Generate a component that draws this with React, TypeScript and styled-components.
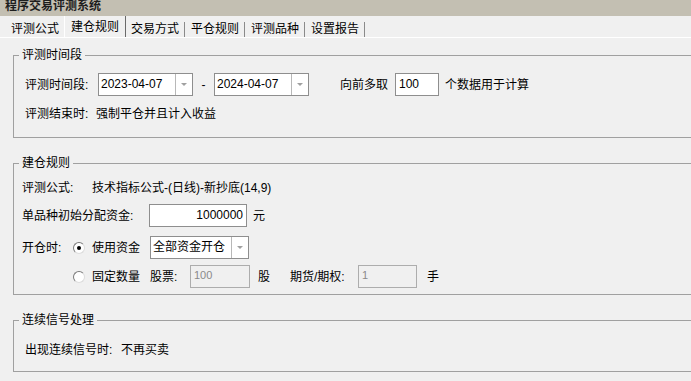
import React from 'react';
import styled, { createGlobalStyle } from 'styled-components';

const GlobalStyle = createGlobalStyle`
  html, body {
    margin: 0;
    padding: 0;
    background: #f0f0f0;
  }
  body {
    font-family: "Liberation Sans", "Noto Sans CJK SC", sans-serif;
    font-size: 12px;
    line-height: 16px;
    color: #000;
    overflow: hidden;
  }
`;

const Window = styled.div`
  width: 691px;
  height: 381px;
  overflow: hidden;
  background: #f0f0f0;
`;

const TitleBar = styled.div`
  height: 16px;
  background: #c3bfb2;
  overflow: hidden;
  padding-left: 5px;
`;

const Title = styled.div`
  font-weight: bold;
  font-size: 12px;
  line-height: 13px;
  color: #1e1e1e;
`;

const TabBar = styled.div`
  height: 21px;
  display: flex;
  padding-left: 5px;
  border-bottom: 1px solid #fff;
`;

const Tab = styled.div<{ $active?: boolean }>`
  width: ${p => (p.$active ? '62px' : '60px')};
  margin: ${p => (p.$active ? '0 -1px' : '0')};
  box-sizing: border-box;
  display: flex;
  justify-content: space-between;
  border-left: ${p => (p.$active ? '1px solid #fff' : 'none')};
  border-right: ${p => (p.$active ? '1px solid #6a6a6a' : 'none')};
`;

const TabLabel = styled.span<{ $active?: boolean }>`
  padding-left: 6px;
  padding-top: ${p => (p.$active ? '3px' : '5px')};
`;

const TabSep = styled.span`
  width: 1px;
  height: 15px;
  align-self: flex-end;
  background: #8a8a8a;
`;

const Content = styled.div`
  padding: 9px 0 0 13px;
`;

const Group = styled.fieldset<{ $mb?: number }>`
  margin: 0 -30px ${p => p.$mb ?? 17}px 0;
  padding: 0;
  border: 1px solid #a0a0a0;
  min-width: 0;
`;

const Legend = styled.legend`
  margin-left: 5px;
  padding: 0 3px;
  line-height: 16px;
`;

const GroupBody = styled.div<{ $pad: string }>`
  padding: ${p => p.$pad};
  display: flex;
  flex-direction: column;
`;

const Row = styled.div<{ $mt?: number }>`
  display: flex;
  align-items: center;
  margin-top: ${p => p.$mt ?? 0}px;
  white-space: nowrap;
`;

const Label = styled.span<{ $w?: number; $ml?: number }>`
  display: inline-block;
  width: ${p => (p.$w ? `${p.$w}px` : 'auto')};
  margin-left: ${p => p.$ml ?? 0}px;
  flex-shrink: 0;
`;

const ComboBox = styled.div<{ $w: number }>`
  width: ${p => p.$w}px;
  height: 23px;
  box-sizing: border-box;
  border: 1px solid #8e8e8e;
  background: #fff;
  display: flex;
  flex-shrink: 0;
`;

const ComboText = styled.span`
  flex: 1;
  padding-left: 2px;
  line-height: 21px;
`;

const ComboButton = styled.span`
  width: 16px;
  border-left: 1px solid #b8b8b8;
  display: flex;
  align-items: center;
  justify-content: center;

  &::after {
    content: '';
    border-left: 3px solid transparent;
    border-right: 3px solid transparent;
    border-top: 3px solid #a0a0a0;
  }
`;

const Dash = styled.span`
  width: 21px;
  text-align: center;
`;

const TextBox = styled.div<{ $w: number; $right?: boolean; $disabled?: boolean; $ml?: number }>`
  width: ${p => p.$w}px;
  height: 23px;
  box-sizing: border-box;
  margin-left: ${p => p.$ml ?? 0}px;
  border: 1px solid ${p => (p.$disabled ? '#adadad' : '#8e8e8e')};
  background: ${p => (p.$disabled ? '#f0f0f0' : '#fff')};
  color: ${p => (p.$disabled ? '#8a8a8a' : '#000')};
  font-size: ${p => (p.$disabled ? '11px' : '12px')};
  text-align: ${p => (p.$right ? 'right' : 'left')};
  padding: ${p => (p.$disabled ? '2px 3px' : '3px 3px')};
  line-height: 14px;
  flex-shrink: 0;
`;

const Radio = styled.span<{ $checked?: boolean }>`
  width: 12px;
  height: 12px;
  box-sizing: border-box;
  border-radius: 50%;
  border: 1px solid;
  border-color: #7a7a7a #dcdcdc #dcdcdc #7a7a7a;
  background: #fff;
  display: inline-flex;
  align-items: center;
  justify-content: center;
  margin: 0 7px 0 1px;
  flex-shrink: 0;

  &::after {
    content: '';
    width: 4px;
    height: 4px;
    border-radius: 50%;
    background: ${p => (p.$checked ? '#000' : 'transparent')};
  }
`;

const Combo: React.FC<{ width: number; value: string }> = ({ width, value }) => (
  <ComboBox $w={width}>
    <ComboText>{value}</ComboText>
    <ComboButton />
  </ComboBox>
);

const tabs = ['评测公式', '建仓规则', '交易方式', '平仓规则', '评测品种', '设置报告'];
const activeTab = 1;

const App: React.FC = () => {
  return (
    <Window>
      <GlobalStyle />
      <TitleBar>
        <Title>程序交易评测系统</Title>
      </TitleBar>
      <TabBar>
        {tabs.map((t, i) => (
          <Tab key={t} $active={i === activeTab}>
            <TabLabel $active={i === activeTab}>{t}</TabLabel>
            {i > activeTab && <TabSep />}
          </Tab>
        ))}
      </TabBar>
      <Content>
        <Group>
          <Legend>评测时间段</Legend>
          <GroupBody $pad="10px 0 15px 11px">
            <Row>
              <Label $w={73}>评测时间段:</Label>
              <Combo width={95} value="2023-04-07" />
              <Dash>-</Dash>
              <Combo width={95} value="2024-04-07" />
              <Label $ml={31}>向前多取</Label>
              <TextBox $w={44} $ml={7}>100</TextBox>
              <Label $ml={6}>个数据用于计算</Label>
            </Row>
            <Row $mt={10}>
              <Label $w={71}>评测结束时:</Label>
              <Label>强制平仓并且计入收益</Label>
            </Row>
          </GroupBody>
        </Group>

        <Group>
          <Legend>建仓规则</Legend>
          <GroupBody $pad="9px 0 6px 8px">
            <Row>
              <Label $w={70}>评测公式:</Label>
              <Label>技术指标公式-(日线)-新抄底(14,9)</Label>
            </Row>
            <Row $mt={8}>
              <Label $w={127}>单品种初始分配资金:</Label>
              <TextBox $w={98} $right>1000000</TextBox>
              <Label $ml={6}>元</Label>
            </Row>
            <Row $mt={9}>
              <Label $w={50}>开仓时:</Label>
              <Radio $checked />
              <Label $w={58}>使用资金</Label>
              <Combo width={99} value="全部资金开仓" />
            </Row>
            <Row $mt={6}>
              <Label $w={50} />
              <Radio />
              <Label $w={58}>固定数量</Label>
              <Label $w={40}>股票:</Label>
              <TextBox $w={60} $disabled>100</TextBox>
              <Label $ml={8} $w={32}>股</Label>
              <Label $w={68}>期货/期权:</Label>
              <TextBox $w={59} $disabled>1</TextBox>
              <Label $ml={10}>手</Label>
            </Row>
          </GroupBody>
        </Group>

        <Group $mb={0}>
          <Legend>连续信号处理</Legend>
          <GroupBody $pad="14px 0 13px 11px">
            <Row>
              <Label $w={96}>出现连续信号时:</Label>
              <Label>不再买卖</Label>
            </Row>
          </GroupBody>
        </Group>
      </Content>
    </Window>
  );
};

export default App;
